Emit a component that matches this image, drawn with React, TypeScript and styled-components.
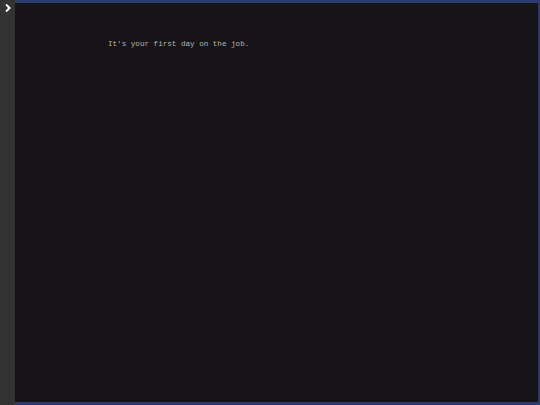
import React from "react";
import styled, { createGlobalStyle } from "styled-components";

const Global = createGlobalStyle`
  html, body { margin: 0; padding: 0; background: #171417; }
  #root { width: 540px; height: 405px; }
`;

const Page = styled.div`
  display: flex;
  width: 540px;
  height: 405px;
  overflow: hidden;
`;

const Sidebar = styled.div`
  width: 15px;
  flex: none;
  background: #333333;
  display: flex;
  flex-direction: column;
  align-items: center;
  padding-top: 3px;
  box-sizing: border-box;
`;

const Main = styled.main`
  flex: 1;
  background: #171417;
  border-top: 3px solid #2b3a70;
  border-right: 2px solid #2b3a70;
  border-bottom: 3px solid #2b3a70;
  box-sizing: border-box;
  padding: 37px 0 0 93px;
`;

const Line = styled.p`
  margin: 0;
  font-family: "Liberation Mono", "Courier New", monospace;
  font-size: 7.6px;
  line-height: 9px;
  color: #b4b4b4;
  white-space: pre;
`;

export default function App() {
  return (
    <>
      <Global />
      <Page>
        <Sidebar>
          <svg width="8" height="10" viewBox="0 0 8 10">
            <path d="M2 1.5 L5.5 5 L2 8.5" stroke="#ffffff" strokeWidth="2" fill="none" />
          </svg>
        </Sidebar>
        <Main>
          <Line>It's your first day on the job.</Line>
        </Main>
      </Page>
    </>
  );
}
